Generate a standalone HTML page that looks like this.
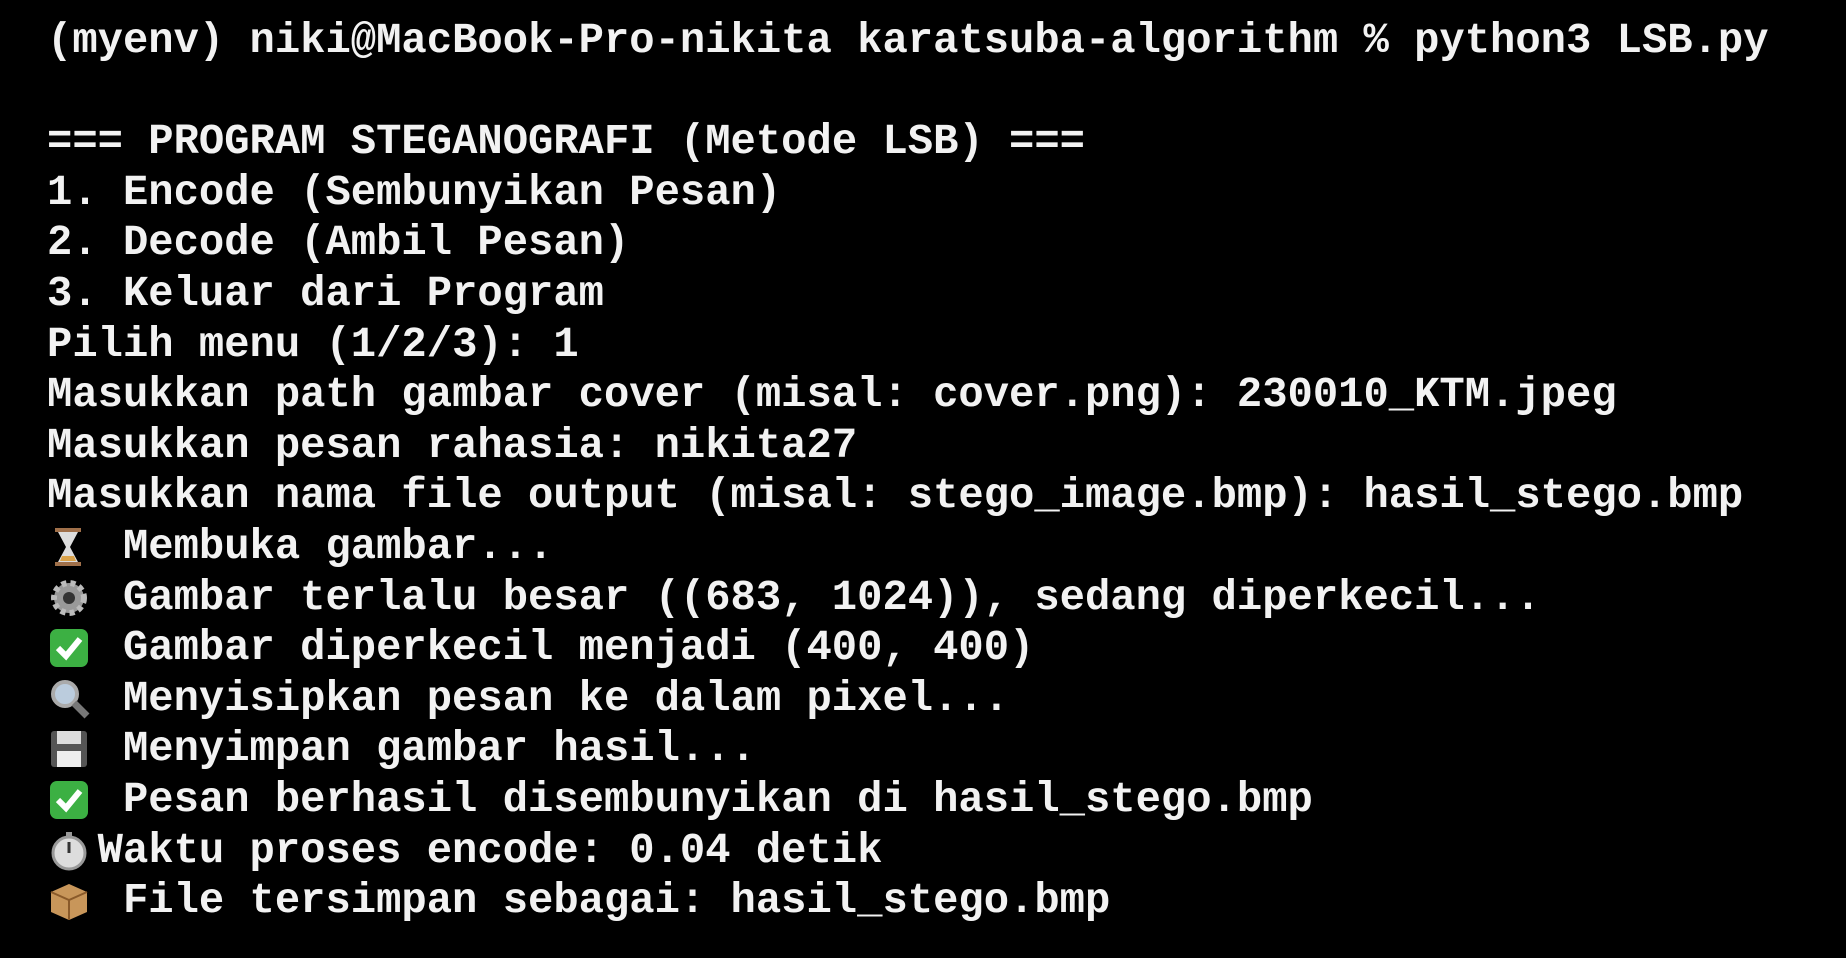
<!DOCTYPE html>
<html><head><meta charset="utf-8"><style>
html,body{margin:0;padding:0;background:#000;width:1846px;height:958px;overflow:hidden}
.t{position:absolute;left:47px;top:16px;font-family:"Liberation Mono",monospace;font-size:42.2px;line-height:50.6px;color:#f2f2f2;font-weight:bold;white-space:pre;letter-spacing:0}
.e{display:inline-block;width:2ch;height:40px;vertical-align:-8px;position:relative}
.e svg{position:absolute;left:0;top:0}
</style></head><body>
<div class="t">(myenv) niki@MacBook-Pro-nikita karatsuba-algorithm % python3 LSB.py

=== PROGRAM STEGANOGRAFI (Metode LSB) ===
1. Encode (Sembunyikan Pesan)
2. Decode (Ambil Pesan)
3. Keluar dari Program
Pilih menu (1/2/3): 1
Masukkan path gambar cover (misal: cover.png): 230010_KTM.jpeg
Masukkan pesan rahasia: nikita27
Masukkan nama file output (misal: stego_image.bmp): hasil_stego.bmp
<span class="e"><svg width="46" height="42" viewBox="0 0 46 42"><rect x="8" y="2" width="26" height="4" fill="#a0704a"/><rect x="8" y="36" width="26" height="4" fill="#a0704a"/><path d="M11 6 L31 6 L23 21 L31 36 L11 36 L19 21 Z" fill="#ddd"/><path d="M15 30 L27 30 L29 35 L13 35Z" fill="#d9a24a"/></svg></span> Membuka gambar...
<span class="e"><svg width="46" height="42" viewBox="0 0 46 42"><circle cx="22" cy="21" r="15" fill="#999" stroke="#bbb" stroke-width="6" stroke-dasharray="5 4"/><circle cx="22" cy="21" r="6" fill="#333"/></svg></span> Gambar terlalu besar ((683, 1024)), sedang diperkecil...
<span class="e"><svg width="46" height="42" viewBox="0 0 46 42"><rect x="3" y="2" width="38" height="38" rx="7" fill="#3cb043"/><path d="M11 21 L19 29 L33 12" stroke="#fff" stroke-width="6" fill="none"/></svg></span> Gambar diperkecil menjadi (400, 400)
<span class="e"><svg width="46" height="42" viewBox="0 0 46 42"><circle cx="18" cy="16" r="12" fill="#bcd" stroke="#aaa" stroke-width="4"/><path d="M27 25 L40 38" stroke="#777" stroke-width="7"/></svg></span> Menyisipkan pesan ke dalam pixel...
<span class="e"><svg width="46" height="42" viewBox="0 0 46 42"><rect x="4" y="3" width="36" height="36" rx="3" fill="#555"/><rect x="10" y="3" width="24" height="13" fill="#ddd"/><rect x="10" y="23" width="24" height="16" fill="#eee"/></svg></span> Menyimpan gambar hasil...
<span class="e"><svg width="46" height="42" viewBox="0 0 46 42"><rect x="3" y="2" width="38" height="38" rx="7" fill="#3cb043"/><path d="M11 21 L19 29 L33 12" stroke="#fff" stroke-width="6" fill="none"/></svg></span> Pesan berhasil disembunyikan di hasil_stego.bmp
<span class="e"><svg width="46" height="42" viewBox="0 0 46 42"><circle cx="22" cy="23" r="16" fill="#ddd" stroke="#999" stroke-width="3"/><rect x="19" y="2" width="6" height="5" fill="#999"/><path d="M22 23 L22 12" stroke="#333" stroke-width="3"/></svg></span>Waktu proses encode: 0.04 detik
<span class="e"><svg width="46" height="42" viewBox="0 0 46 42"><path d="M4 12 L22 4 L40 12 L40 32 L22 40 L4 32Z" fill="#c8965a"/><path d="M4 12 L22 20 L40 12 M22 20 L22 40" stroke="#8a5a2a" stroke-width="2" fill="none"/></svg></span> File tersimpan sebagai: hasil_stego.bmp</div>
</body></html>
